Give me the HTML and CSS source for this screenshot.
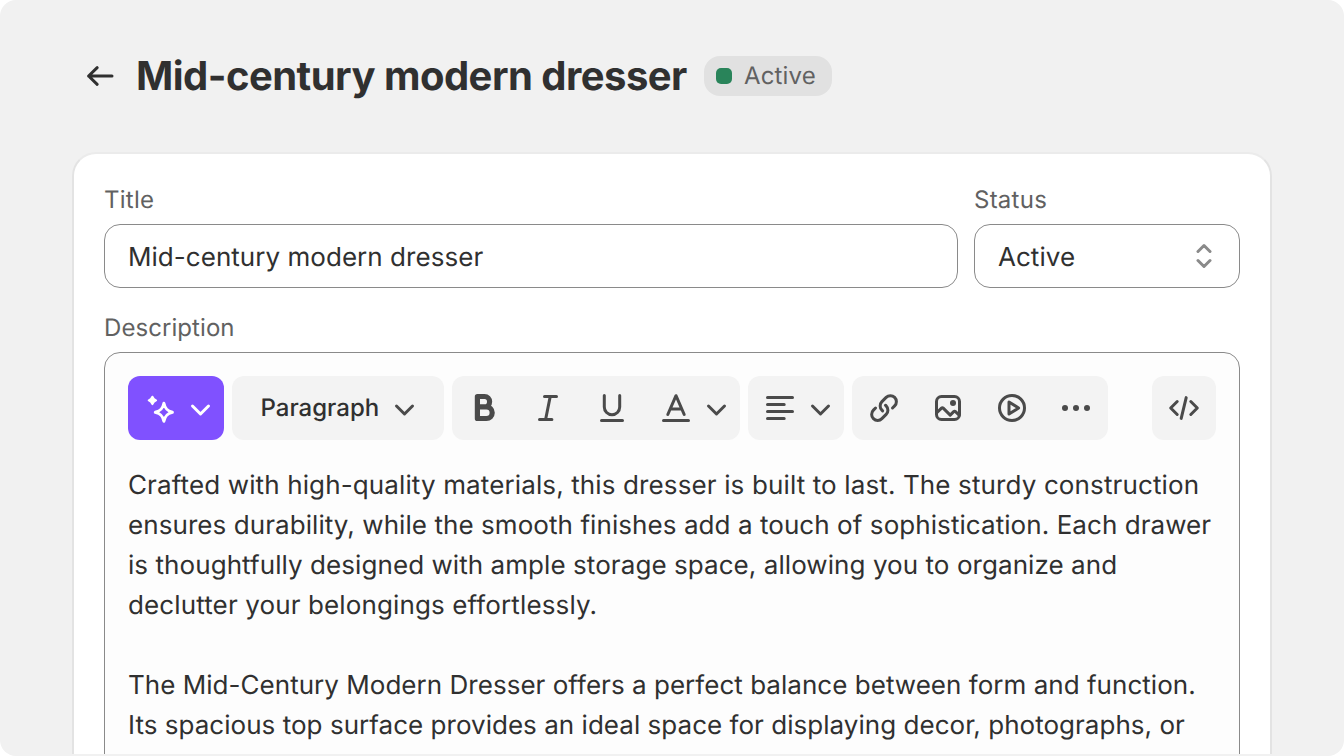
FILE: index.html
```html
<!DOCTYPE html>
<html lang="en">
<head>
<meta charset="utf-8">
<title>Mid-century modern dresser</title>
<link rel="stylesheet" href="styles.css">
</head>
<body>
<div class="page">
  <header class="header">
    <svg class="icon back" viewBox="0 0 40 40"><path d="M8.6 20H32M17.2 11.7 8.6 20l8.6 8.3"/></svg>
    <h1 class="heading">Mid-century modern dresser</h1>
    <span class="badge"><span class="dot"></span><span class="badge-text">Active</span></span>
  </header>
  <main class="card">
    <div class="row">
      <div class="field field-title">
        <label class="label">Title</label>
        <div class="control"><span class="value">Mid-century modern dresser</span></div>
      </div>
      <div class="field field-status">
        <label class="label">Status</label>
        <div class="control"><span class="value">Active</span>
          <svg class="icon select" viewBox="0 0 40 40"><path d="m14 15.5 6-6 6 6M14 24.5l6 6 6-6"/></svg>
        </div>
      </div>
    </div>
    <div class="field field-description">
      <label class="label">Description</label>
      <div class="editor">
        <div class="toolbar">
          <div class="group magic">
            <svg class="icon" viewBox="0 0 40 40"><path d="M23.9 15.3c1.1 5.4 3.2 7.6 8.5 9-5.3 1.4-7.4 3.6-8.5 9-1.1-5.4-3.2-7.6-8.6-9 5.4-1.4 7.5-3.6 8.6-9Z"/><path class="solid" d="M12.4 8.7c.8 1.9 1.7 2.9 3.7 3.7-2 .8-2.9 1.8-3.7 3.7-.8-1.9-1.7-2.9-3.7-3.7 2-.8 2.9-1.8 3.7-3.7Z"/></svg>
            <svg class="icon" viewBox="0 0 40 40"><path d="m12.5 18 8 8 8-8"/></svg>
          </div>
          <div class="group paragraph">
            <span class="paragraph-text">Paragraph</span>
            <svg class="icon" viewBox="0 0 40 40"><path d="m12.5 18 8 8 8-8"/></svg>
          </div>
          <div class="group">
            <span class="tool"><svg class="icon bold" viewBox="0 0 40 40"><path d="M13.4 8.5h7.2a5 5.2 0 0 1 0 10.4h-7.2ZM13.4 18.9h9a5.8 5.8 0 0 1 0 11.6h-9Z"/></svg></span>
            <span class="tool"><svg class="icon" viewBox="0 0 40 40"><path d="M16.5 8.6h12M11.5 31.5h12.4M22.2 8.6l-4.6 22.9"/></svg></span>
            <span class="tool"><svg class="icon" viewBox="0 0 40 40"><path d="M12.3 7.5V19a7.7 7.7 0 0 0 15.4 0V7.5M9.5 32.4h21"/></svg></span>
            <span class="tool color"><svg class="icon" viewBox="0 0 40 40"><path d="M11.8 26.5 20 7.7l8.2 18.8M14.8 20.9h10.4M7.5 32.4h25"/></svg><svg class="icon" viewBox="0 0 40 40"><path d="m12.5 18 8 8 8-8"/></svg></span>
          </div>
          <div class="group align">
            <svg class="icon" viewBox="0 0 40 40"><path d="M7.5 9.5h25M7.5 16.5h16.7M7.5 23.5h25M7.5 30.5h16.7"/></svg>
            <svg class="icon" viewBox="0 0 40 40"><path d="m12.5 18 8 8 8-8"/></svg>
          </div>
          <div class="group">
            <span class="tool"><svg class="icon filled" viewBox="0 0 20 20"><path d="M15.842 4.175a3.746 3.746 0 0 0-5.298 0l-2.116 2.117a3.75 3.75 0 0 0 .01 5.313l.338.336a.75.75 0 1 0 1.057-1.064l-.339-.337a2.25 2.25 0 0 1-.005-3.187l2.116-2.117a2.246 2.246 0 1 1 3.173 3.18l-1.052 1.047a.75.75 0 0 0 1.058 1.064l1.052-1.047a3.746 3.746 0 0 0 .006-5.305Z"/><path d="M4.178 15.845a3.75 3.75 0 0 0 5.304 0l2.121-2.121a3.75 3.75 0 0 0 0-5.303l-.362-.362a.75.75 0 0 0-1.06 1.06l.362.362a2.25 2.25 0 0 1 0 3.182l-2.122 2.122a2.25 2.25 0 1 1-3.182-3.182l1.07-1.07a.75.75 0 1 0-1.062-1.06l-1.069 1.069a3.75 3.75 0 0 0 0 5.303Z"/></svg></span>
            <span class="tool"><svg class="icon" viewBox="0 0 40 40"><rect x="8.5" y="8.5" width="23" height="23" rx="5"/><path d="m8.8 24.8 4.7-4.7c.6-.6 1.1-.6 1.7 0l7 7 3.5-3.5c.6-.6 1.2-.6 1.8 0l3.7 3.7"/><circle class="solid-dot" cx="25" cy="15" r="3"/></svg></span>
            <span class="tool"><svg class="icon" viewBox="0 0 40 40"><circle cx="20" cy="20" r="12.5"/><path d="M17 14v12l9.6-6Z"/></svg></span>
            <span class="tool"><svg class="icon" viewBox="0 0 40 40"><circle class="solid-dot" cx="9" cy="20" r="3"/><circle class="solid-dot" cx="20" cy="20" r="3"/><circle class="solid-dot" cx="31" cy="20" r="3"/></svg></span>
          </div>
          <div class="group code">
            <span class="tool"><svg class="icon" viewBox="0 0 40 40"><path d="M13.2 13.5 6.7 20l6.5 6.5M26.8 13.5l6.5 6.5-6.5 6.5M22.2 9.6l-5 20.8"/></svg></span>
          </div>
        </div>
        <div class="copy">
          <p class="text"><span class="wide">Crafted with high-quality materials, this dresser is built to last. The sturdy construction</span><br><span class="medium">ensures durability, while the smooth finishes add a touch of sophistication. Each drawer</span><br><span class="medium">is thoughtfully designed with ample storage space, allowing you to organize and</span><br><span class="wide">declutter your belongings effortlessly.</span></p>
          <p class="text">The Mid-Century Modern Dresser offers a perfect balance between form and function.<br>Its spacious top surface provides an ideal space for displaying decor, photographs, or</p>
        </div>
      </div>
    </div>
  </main>
</div>
</body>
</html>
```
FILE: styles.css
```css
* { box-sizing: border-box; }
html { background: #fff; }
body {
  margin: 0;
  font-family: Inter, "Liberation Sans", sans-serif;
  color: #303030;
  text-rendering: geometricPrecision;
}
.page {
  width: 1344px;
  height: 756px;
  padding: 56px 72px 2px;
  overflow: hidden;
  display: flex;
  flex-direction: column;
  background: #f1f1f1;
  border-radius: 16px;
}
.header {
  display: flex;
  align-items: center;
  height: 40px;
  margin-bottom: 56px;
  padding-left: 8px;
  flex: none;
}
.icon {
  display: block;
  width: 40px;
  height: 40px;
  flex: none;
  fill: none;
  stroke: #4a4a4a;
  stroke-width: 3;
  stroke-linecap: round;
  stroke-linejoin: round;
}
.icon.back { stroke: #303030; }
.icon.select { stroke: #8a8a8a; }
.icon.bold { stroke-width: 5.2; }
.icon.filled { fill: #4a4a4a; stroke: none; }
.solid-dot { fill: #4a4a4a; stroke: none; }
.solid { fill: #fff; stroke-width: 2; }
.heading {
  margin: 0 0 0 16px;
  width: 568px;
  font-size: 40px;
  line-height: 40px;
  font-weight: 650;
  letter-spacing: -0.53px;
  white-space: nowrap;
}
.badge {
  display: flex;
  align-items: center;
  gap: 12px;
  width: 128px;
  height: 40px;
  padding-left: 12px;
  border-radius: 16px;
  background: #e1e1e1;
}
.dot {
  width: 16px;
  height: 16px;
  border-radius: 5px;
  background: #29845a;
}
.badge-text {
  font-size: 24px;
  line-height: 40px;
  letter-spacing: 0.15px;
  color: #616161;
}
.card {
  flex: 1;
  min-height: 0;
  padding: 30px 30px 0;
  background: #fff;
  border: 2px solid #e3e3e3;
  border-top-color: #ebebeb;
  border-bottom: 0;
  border-radius: 24px 24px 0 0;
  overflow: hidden;
}
.row { display: flex; gap: 16px; }
.field-title { width: 854px; }
.field-status { width: 266px; }
.field-description { margin-top: 24px; }
.label {
  display: block;
  height: 40px;
  font-size: 24px;
  line-height: 32px;
  letter-spacing: 0.07px;
  color: #616161;
}
.row .label { letter-spacing: 0.25px; }
.control {
  display: flex;
  align-items: center;
  justify-content: space-between;
  height: 64px;
  padding: 0 15px 0 23px;
  border: 1px solid #8a8a8a;
  border-radius: 16px;
}
.value {
  padding-top: 3px;
  font-size: 26px;
  line-height: 40px;
  letter-spacing: 0.04px;
}
.editor {
  height: 460px;
  padding: 23px 23px 0;
  border: 1px solid #8a8a8a;
  border-radius: 16px;
  background: #fdfdfd;
}
.toolbar { display: flex; gap: 8px; }
.group {
  display: flex;
  align-items: center;
  height: 64px;
  border-radius: 12px;
  background: #f3f3f3;
}
.magic { width: 96px; padding-left: 12px; background: #8051ff; }
.magic .icon { stroke: #fff; }
.paragraph { width: 212px; padding: 0 20px 0 28.5px; justify-content: space-between; }
.paragraph-text { font-size: 24px; line-height: 40px; font-weight: 450; }
.tool {
  display: flex;
  align-items: center;
  justify-content: center;
  width: 64px;
}
.tool.color { width: 96px; padding-left: 8px; }
.align { width: 96px; padding-left: 12px; }
.code { margin-left: auto; }
.copy { padding-top: 26px; }
.text {
  margin: 0 0 40px;
  font-size: 26px;
  line-height: 40px;
  letter-spacing: 0.03px;
  white-space: nowrap;
}
.wide { letter-spacing: 0.125px; }
.medium { letter-spacing: 0.068px; }
```
